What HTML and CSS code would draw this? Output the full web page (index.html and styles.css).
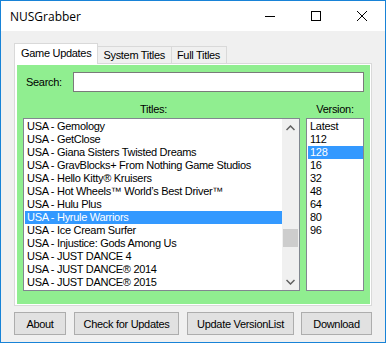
FILE: index.html
```html
<!DOCTYPE html>
<html lang="en">
<head>
    <meta charset="UTF-8">
    <title>NUSGrabber</title>
    <link rel="stylesheet" href="styles.css">
</head>
<body>
<div class="window">
    <div class="titlebar">
        <span class="titlebar__text">NUSGrabber</span>
        <div class="titlebar__controls">
            <span class="ctl">
                <svg width="10" height="10" viewBox="0 0 10 10"><path d="M0 5.5H10" stroke="#000" stroke-width="1"/></svg>
            </span>
            <span class="ctl">
                <svg width="10" height="10" viewBox="0 0 10 10"><rect x="0.5" y="0.5" width="9" height="9" fill="none" stroke="#000" stroke-width="1"/></svg>
            </span>
            <span class="ctl">
                <svg width="10" height="10" viewBox="0 0 10 10"><path d="M0 0L10 10M10 0L0 10" stroke="#000" stroke-width="1"/></svg>
            </span>
        </div>
    </div>

    <div class="client">
        <div class="tabs">
            <div class="tab tab--active">Game Updates</div>
            <div class="tab">System Titles</div>
            <div class="tab">Full Titles</div>
        </div>

        <div class="tabpage">
            <div class="panel">
                <div class="search-row">
                    <label class="search-label" for="search">Search:</label>
                    <input type="text" class="search-input" id="search">
                </div>

                <div class="lists">
                    <div class="col col--titles">
                        <div class="col-label col-label--titles">Titles:</div>
                        <div class="listbox">
                            <ul class="listbox__items">
                                <li>USA - Gemology</li>
                                <li>USA - GetClose</li>
                                <li>USA - Giana Sisters Twisted Dreams</li>
                                <li>USA - GravBlocks+ From Nothing Game Studios</li>
                                <li>USA - Hello Kitty&reg; Kruisers</li>
                                <li>USA - Hot Wheels&trade; World&rsquo;s Best Driver&trade;</li>
                                <li>USA - Hulu Plus</li>
                                <li class="selected">USA - Hyrule Warriors</li>
                                <li>USA - Ice Cream Surfer</li>
                                <li>USA - Injustice: Gods Among Us</li>
                                <li>USA - JUST DANCE 4</li>
                                <li>USA - JUST DANCE&reg; 2014</li>
                                <li>USA - JUST DANCE&reg; 2015</li>
                            </ul>
                            <div class="scrollbar">
                                <div class="scrollbar__btn">
                                    <svg width="9" height="6" viewBox="0 0 9 6"><path d="M0.5 5L4.5 1L8.5 5" fill="none" stroke="#606060" stroke-width="1.5"/></svg>
                                </div>
                                <div class="scrollbar__track">
                                    <div class="scrollbar__thumb"></div>
                                </div>
                                <div class="scrollbar__btn">
                                    <svg width="9" height="6" viewBox="0 0 9 6"><path d="M0.5 1L4.5 5L8.5 1" fill="none" stroke="#606060" stroke-width="1.5"/></svg>
                                </div>
                            </div>
                        </div>
                    </div>
                    <div class="col col--version">
                        <div class="col-label">Version:</div>
                        <div class="listbox">
                            <ul class="listbox__items">
                                <li>Latest</li>
                                <li>112</li>
                                <li class="selected">128</li>
                                <li>16</li>
                                <li>32</li>
                                <li>48</li>
                                <li>64</li>
                                <li>80</li>
                                <li>96</li>
                            </ul>
                        </div>
                    </div>
                </div>
            </div>
        </div>

        <div class="buttons">
            <button class="btn btn--about">About</button>
            <button class="btn btn--check">Check for Updates</button>
            <button class="btn btn--update">Update VersionList</button>
            <button class="btn btn--download">Download</button>
        </div>
    </div>
</div>
</body>
</html>
```

FILE: styles.css
```css
* {
    margin: 0;
    padding: 0;
    box-sizing: border-box;
}

body {
    background: #ffffff;
}

.window {
    width: 386px;
    height: 343px;
    border: 1px solid #1883d7;
    display: flex;
    flex-direction: column;
    font-family: "Liberation Sans", Arial, sans-serif;
    font-size: 11px;
    letter-spacing: -0.3px;
    color: #000;
}

/* title bar */

.titlebar {
    height: 30px;
    background: #ffffff;
    display: flex;
    align-items: center;
}

.titlebar__text {
    padding-left: 9px;
    font-family: "Open Sans", "Noto Sans", sans-serif;
    font-size: 12px;
    letter-spacing: 0;
    flex: 1;
}

.titlebar__controls {
    display: flex;
    height: 100%;
}

.ctl {
    width: 46px;
    height: 100%;
    display: flex;
    align-items: center;
    justify-content: center;
}

.ctl svg {
    display: block;
}

/* client area */

.client {
    flex: 1;
    background: #f0f0f0;
    padding: 12px 13px 7px 13px;
    display: flex;
    flex-direction: column;
}

.tabs {
    height: 20px;
    display: flex;
    align-items: flex-end;
}

.tab {
    height: 17px;
    padding: 0 6px 0 5px;
    border: 1px solid #d9d9d9;
    border-bottom: none;
    background: #f0f0f0;
    line-height: 16px;
    white-space: nowrap;
}

.tab + .tab {
    margin-left: -1px;
}

.tab--active {
    position: relative;
    z-index: 1;
    height: 21px;
    margin-bottom: -1px;
    padding: 0 6px 0 6px;
    background: #ffffff;
    line-height: 19px;
}

.tabpage {
    height: 243px;
    border: 1px solid #d9d9d9;
    background: #ffffff;
    padding: 1px 1px 1px 2px;
}

.panel {
    height: 100%;
    background: #90ee90;
    padding: 7px 6px 0 6px;
}

/* search */

.search-row {
    display: flex;
    align-items: center;
    height: 20px;
    margin-bottom: 11px;
}

.search-label {
    width: 50px;
    padding-left: 3px;
}

.search-input {
    flex: 1;
    height: 20px;
    border: 1px solid #7a7a7a;
    background: #ffffff;
    outline: none;
}

/* lists */

.lists {
    display: flex;
    gap: 6px;
}

.col--titles {
    width: 277px;
}

.col--version {
    width: 58px;
}

.col-label {
    height: 13px;
    line-height: 13px;
    margin-bottom: 2px;
    text-align: center;
}

.col-label--titles {
    padding-right: 16px;
}

.listbox {
    height: 173px;
    border: 1px solid #828790;
    background: #ffffff;
    display: flex;
    overflow: hidden;
    padding: 1px 0 0 1px;
}

.listbox__items {
    flex: 1;
    list-style: none;
    overflow: hidden;
}

.listbox__items li {
    height: 13px;
    line-height: 13px;
    padding-left: 2px;
    white-space: nowrap;
}

.listbox__items li.selected {
    background: #3399ff;
    color: #ffffff;
}

.scrollbar {
    width: 17px;
    margin-top: -1px;
    background: #f0f0f0;
    display: flex;
    flex-direction: column;
}

.scrollbar__btn {
    height: 17px;
    display: flex;
    align-items: center;
    justify-content: center;
}

.scrollbar__btn svg {
    display: block;
}

.scrollbar__track {
    flex: 1;
    padding: 0 1px;
}

.scrollbar__thumb {
    height: 18px;
    margin-top: 93px;
    background: #cdcdcd;
}

/* buttons */

.buttons {
    margin-top: 6px;
    display: flex;
    gap: 8px;
}

.btn {
    height: 23px;
    border: 1px solid #adadad;
    background: #e1e1e1;
    font-family: "Liberation Sans", Arial, sans-serif;
    font-size: 11px;
    letter-spacing: -0.3px;
    color: #000;
}

.btn--about {
    width: 52px;
}

.btn--check {
    width: 105px;
}

.btn--update {
    width: 107px;
}

.btn--download {
    width: 71px;
    margin-left: -1px;
}
```
